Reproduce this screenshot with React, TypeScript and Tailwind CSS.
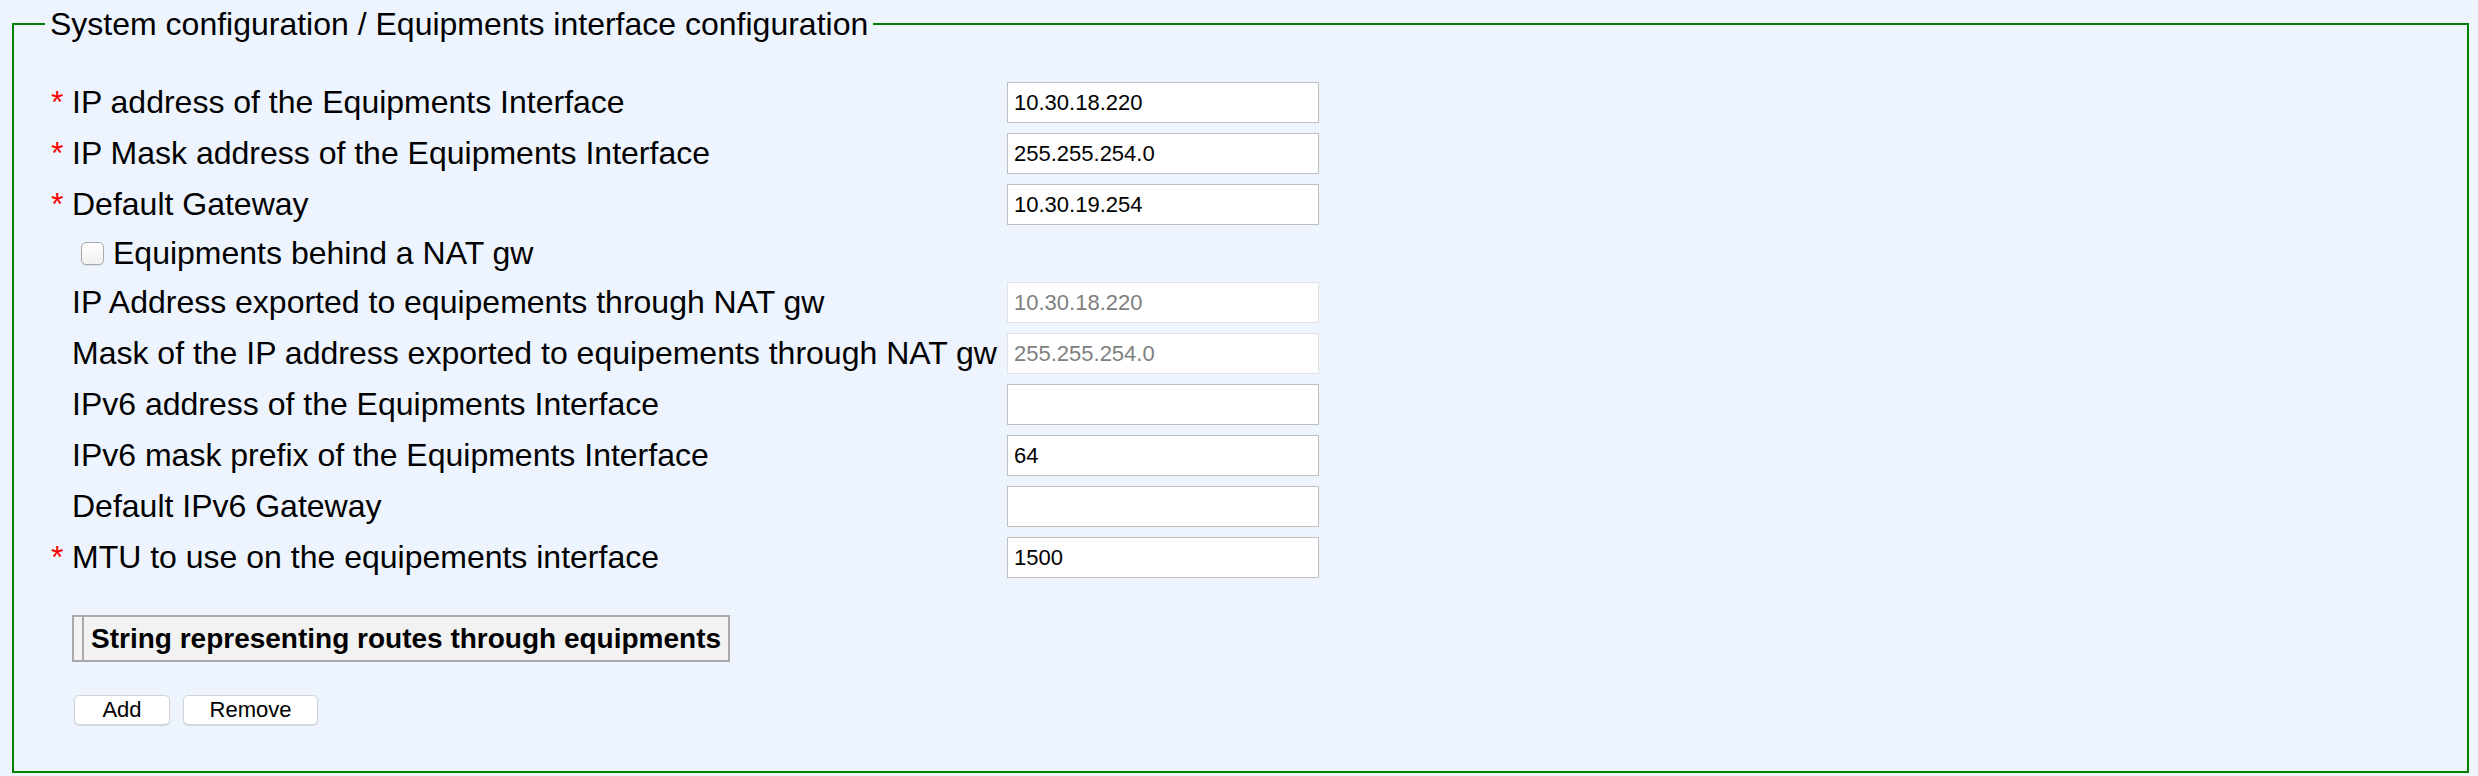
import React from 'react';

interface FieldRow {
  label: string;
  value?: string;
  required?: boolean;
  disabled?: boolean;
  checkbox?: boolean;
}

const rows: FieldRow[] = [
  { label: 'IP address of the Equipments Interface', value: '10.30.18.220', required: true },
  { label: 'IP Mask address of the Equipments Interface', value: '255.255.254.0', required: true },
  { label: 'Default Gateway', value: '10.30.19.254', required: true },
  { label: 'Equipments behind a NAT gw', checkbox: true },
  { label: 'IP Address exported to equipements through NAT gw', value: '10.30.18.220', disabled: true },
  { label: 'Mask of the IP address exported to equipements through NAT gw', value: '255.255.254.0', disabled: true },
  { label: 'IPv6 address of the Equipments Interface', value: '' },
  { label: 'IPv6 mask prefix of the Equipments Interface', value: '64' },
  { label: 'Default IPv6 Gateway', value: '' },
  { label: 'MTU to use on the equipements interface', value: '1500', required: true },
];

const App: React.FC = () => {
  return (
    <div className="min-h-screen bg-[#edf4fe] pl-[12px] pr-[9px] pt-[5px] pb-[7px] font-['Liberation_Sans',Arial,sans-serif] text-black">
      <fieldset className="m-0 p-0 border-2 border-[#008000]">
        <legend className="ml-[31px] px-[5px] text-[32px] leading-[38px]">
          System configuration / Equipments interface configuration
        </legend>

        <div className="pl-[37px] pt-[34px] pb-[46px]">
          {/* Form rows */}
          <div>
            {rows.map((row, i) =>
              row.checkbox ? (
                <div key={i} className="h-[47px] grid grid-cols-[21px_935px_312px] items-center">
                  <span />
                  <label className="flex items-center text-[32px] leading-[37px]">
                    <input
                      type="checkbox"
                      className="appearance-none ml-[9px] mr-[9px] w-[23px] h-[23px] rounded-[5px] border border-[#a9a9a9] bg-gradient-to-b from-white to-[#f0f0f0] shadow-[0_1px_1px_rgba(0,0,0,0.1)]"
                    />
                    {row.label}
                  </label>
                  <span />
                </div>
              ) : (
                <div key={i} className="h-[51px] grid grid-cols-[21px_935px_312px] items-center">
                  <span className="text-[32px] leading-[37px] text-[#ff0000]">{row.required ? '*' : ''}</span>
                  <span className="text-[32px] leading-[37px] whitespace-nowrap">{row.label}</span>
                  <input
                    type="text"
                    readOnly
                    disabled={row.disabled}
                    value={row.value}
                    className={
                      row.disabled
                        ? 'w-[312px] h-[41px] pl-[6px] bg-white border border-[#e2e2e2] text-[22px] text-[#808080] outline-none'
                        : 'w-[312px] h-[41px] pl-[6px] bg-white border border-[#bfbfbf] text-[22px] text-black outline-none'
                    }
                  />
                </div>
              )
            )}
          </div>

          {/* Routes table header */}
          <div className="mt-[32px] ml-[21px] inline-flex border-2 border-[#a9a9a9] bg-[#f2f2f2]">
            <div className="w-[10px] border-r-2 border-[#a9a9a9]" />
            <div className="px-[7px] py-[5px] text-[28px] leading-[33px] font-bold whitespace-nowrap">
              String representing routes through equipments
            </div>
          </div>

          <div className="mt-[28px] ml-[23px] flex gap-[13px]">
            <button className="w-[96px] h-[30px] rounded-[5px] bg-white border border-[#d4d4d4] shadow-[0_1px_1px_rgba(0,0,0,0.12)] text-[22px] leading-[26px]">
              Add
            </button>
            <button className="w-[135px] h-[30px] rounded-[5px] bg-white border border-[#d4d4d4] shadow-[0_1px_1px_rgba(0,0,0,0.12)] text-[22px] leading-[26px]">
              Remove
            </button>
          </div>
        </div>
      </fieldset>
    </div>
  );
};

export default App;
